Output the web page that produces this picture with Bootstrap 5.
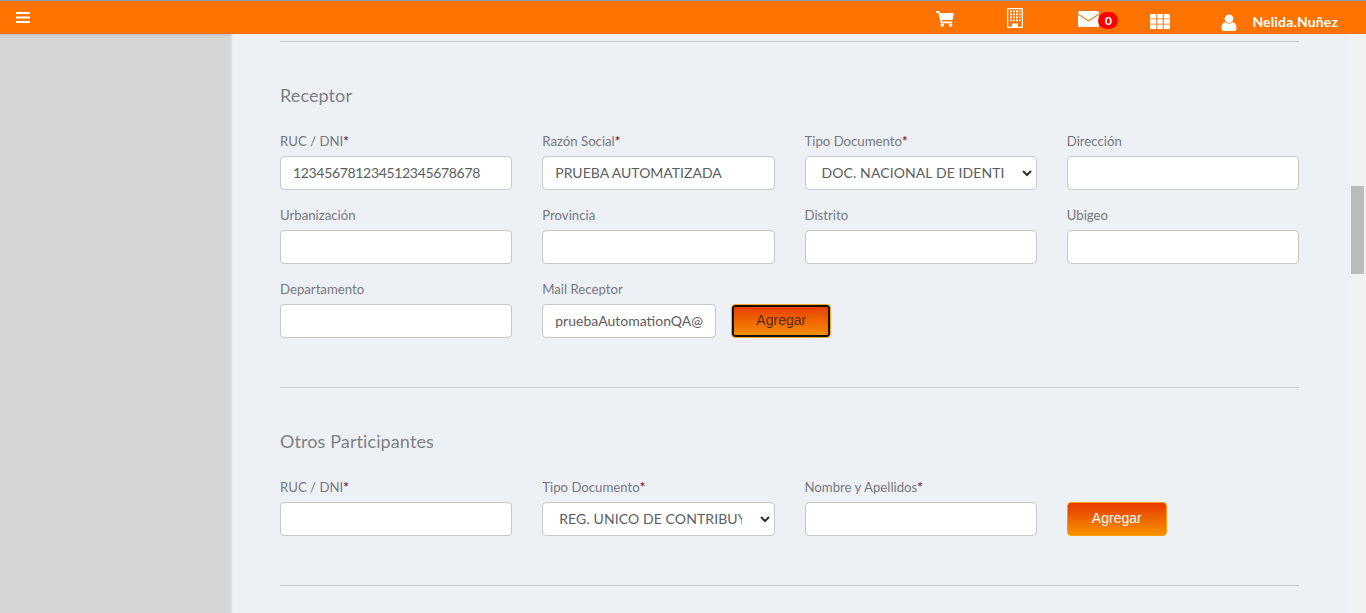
<!DOCTYPE html>
<html lang="en">
<head>
  <meta charset="UTF-8">
  <meta name="viewport" content="width=device-width, initial-scale=1.0">
  <title>Receptor</title>
  <link href="https://cdn.jsdelivr.net/npm/bootstrap@5.3.0/dist/css/bootstrap.min.css" rel="stylesheet">
  <style>
    html, body { height: 100%; overflow: hidden; }
    body { font-family: Lato, "Liberation Sans", sans-serif; background: #edf0f5; color: #76797c; }
    .topbar { height: 34px; background: #ff7300; border-top: 1px solid #8a9bb5; color: #fff; }
    .topbar svg { display: block; fill: #fff; }
    .menu-btn { margin: 11px 0 0 16px; }
    .top-icon { position: relative; }
    .icon-cart { margin-top: 10px; }
    .icon-building { margin: 7px 0 0 53px; }
    .icon-mail { margin: 10px 0 0 55px; }
    .icon-grid { margin: 13px 0 0 51px; }
    .icon-user { margin: 13px 0 0 51px; }
    .user-name { font-size: 14px; font-weight: 700; line-height: 17px; letter-spacing: .15px; margin: 12px 28px 0 15px; }
    .mail-count { position: absolute; left: 20px; top: 1px; width: 20px; height: 17px; border-radius: 9px; background: #f00; color: #fff; font-size: 12px; font-weight: 700; line-height: 17px; text-align: center; }
    .shell { height: calc(100% - 34px); }
    .side-panel { width: 231px; background: #d6d6d6; box-shadow: inset 0 3px 3px -2px rgba(0,0,0,.12), 1px 0 1px rgba(0,0,0,.06); flex: none; }
    .main-panel { padding: 0 50px 0 49px; min-width: 0; }
    .scroll-track { width: 17px; flex: none; background: #f1f1f1; padding: 152px 2px 0; }
    .scroll-thumb { height: 88px; background: #bcbcbc; }
    .rule { height: 1px; background: #c9cbce; }
    .rule-top { margin-top: 7px; }
    .rule-mid, .rule-end { margin-top: 33px; }
    .section-title { font-size: 18px; font-weight: 400; line-height: 22px; letter-spacing: .1px; color: #7d8083; margin: 42px 0 26px; }
    .field-row { --bs-gutter-x: 30px; --bs-gutter-y: 0; }
    .field-label { display: block; font-size: 13.2px; line-height: 17px; padding-top: 1px; margin-bottom: 6px; color: #76797c; }
    .field-label b { color: #8c2c3c; font-weight: 700; }
    .field-box { height: 74px; }
    .form-control.field-input, .form-select.field-input { height: 34px; font-size: 14px; color: #5a5d60; border-color: #c6c8ca; border-radius: 4px; padding: 0 12px 1px; background-color: #fff; }
    .form-select.field-input { padding-left: 16px; padding-right: 32px; letter-spacing: .1px; background-image: url("data:image/svg+xml,%3csvg xmlns='http://www.w3.org/2000/svg' viewBox='0 0 10 7'%3e%3cpath fill='none' stroke='%23333' stroke-width='2' d='M1 1l4 4 4-4'/%3e%3c/svg%3e"); background-position: right 4px center; background-size: 10px 7px; }
    .digits-input { letter-spacing: -.33px; }
    .mail-input { width: 174px; flex: none; }
    .btn-add { width: 100px; height: 34px; padding: 0 0 2px; font-family: "Liberation Sans", Arial, sans-serif; font-size: 14px; color: #fff; border: 1px solid #ff9c00; border-radius: 4px; background: linear-gradient(#e63900, #f79200); }
    .btn-add.is-focused { color: #5a2a10; border-color: #ffa51e; box-shadow: inset 0 0 0 2px #111; }
    .mail-row { gap: 15px; }
    .others-btn { padding-top: 24px; }
  </style>
</head>
<body>
  <div class="topbar d-flex align-items-start">
    <div class="menu-btn">
      <svg width="14" height="11" viewBox="0 0 14 11"><rect y="0" width="14" height="2"/><rect y="4.500" width="14" height="2"/><rect y="9" width="14" height="2"/></svg>
    </div>
    <div class="ms-auto d-flex align-items-start">
      <div class="top-icon icon-cart">
        <svg width="18" height="16" viewBox="0 0 19 17"><path d="M0 0h3.600l.6 2H19l-1.600 7.600H6.300l.3 1.600h10.600v1.800H5L2.400 1.800H0z"/><circle cx="6.600" cy="15" r="1.900"/><circle cx="15.400" cy="15" r="1.900"/></svg>
      </div>
      <div class="top-icon icon-building">
        <svg width="16" height="20" viewBox="0 0 16 20"><path fill-rule="evenodd" d="M1 0h14a1 1 0 0 1 1 1v18a1 1 0 0 1-1 1H1a1 1 0 0 1-1-1V1a1 1 0 0 1 1-1zM1.300 1.300v17.400h3.700v-3.200h6v3.200h3.700V1.300zM3 2.500h2v1.800H3zm3 0h2v1.800H6zm3 0h2v1.800H9zm3 0h1.500v1.800H12zM3 5.500h2v1.800H3zm3 0h2v1.800H6zm3 0h2v1.800H9zm3 0h1.500v1.800H12zM3 8.500h2v1.800H3zm3 0h2v1.800H6zm3 0h2v1.800H9zm3 0h1.500v1.800H12zM3 11.500h2v1.800H3zm3 0h2v1.800H6zm3 0h2v1.800H9zm3 0h1.500v1.800H12z"/></svg>
      </div>
      <div class="top-icon icon-mail">
        <svg width="21" height="16" viewBox="0 0 21 16"><path d="M1.500 0h18A1.500 1.500 0 0 1 21 1.500v.9l-10.500 6.900L0 2.400v-.9A1.500 1.500 0 0 1 1.500 0zM0 3.700l10.500 6.900L21 3.700v10.800a1.500 1.500 0 0 1-1.500 1.500h-18A1.500 1.500 0 0 1 0 14.500z"/></svg>
        <span class="mail-count">0</span>
      </div>
      <div class="top-icon icon-grid">
        <svg width="20" height="15" viewBox="0 0 20 15"><path d="M.6 0h5.700v4.400H0V.6A.6.600 0 0 1 .6 0zm6.700 0h5.400v4.400H7.300zm6.400 0h5.700a.6.600 0 0 1 .6.600v3.800h-6.300zM0 5.300h6.300v4.400H0zm7.300 0h5.400v4.400H7.300zm6.400 0H20v4.400h-6.300zM0 10.600h6.300V15H.6a.6.600 0 0 1-.6-.6zm7.300 0h5.400V15H7.300zm6.400 0H20v3.800a.6.600 0 0 1-.6.600h-5.700z"/></svg>
      </div>
      <div class="top-icon icon-user">
        <svg width="16" height="17" viewBox="0 0 16 18"><circle cx="8" cy="5" r="4.600"/><path d="M0 15c0-4 2-6 4-6.200 1 1 2.500 1.500 4 1.500s3-.5 4-1.500c2 .2 4 2.200 4 6.200 0 2-1.500 3-3 3H3c-1.500 0-3-1-3-3z"/></svg>
      </div>
      <span class="user-name">Nelida.Nuñez</span>
    </div>
  </div>

  <div class="shell d-flex">
    <div class="side-panel"></div>
    <div class="main-panel flex-grow-1">
      <div class="rule rule-top"></div>

      <h5 class="section-title">Receptor</h5>
      <div class="row field-row">
        <div class="col-3 field-box"><label class="field-label">RUC / DNI<b>*</b></label><input class="form-control field-input digits-input" value="123456781234512345678678"></div>
        <div class="col-3 field-box"><label class="field-label">Razón Social<b>*</b></label><input class="form-control field-input" value="PRUEBA AUTOMATIZADA"></div>
        <div class="col-3 field-box"><label class="field-label">Tipo Documento<b>*</b></label><select class="form-select field-input"><option>DOC. NACIONAL DE IDENTIDAD</option></select></div>
        <div class="col-3 field-box"><label class="field-label">Dirección</label><input class="form-control field-input"></div>
        <div class="col-3 field-box"><label class="field-label">Urbanización</label><input class="form-control field-input"></div>
        <div class="col-3 field-box"><label class="field-label">Provincia</label><input class="form-control field-input"></div>
        <div class="col-3 field-box"><label class="field-label">Distrito</label><input class="form-control field-input"></div>
        <div class="col-3 field-box"><label class="field-label">Ubigeo</label><input class="form-control field-input"></div>
        <div class="col-3 field-box"><label class="field-label">Departamento</label><input class="form-control field-input"></div>
        <div class="col-6 field-box">
          <label class="field-label">Mail Receptor</label>
          <div class="d-flex align-items-center mail-row">
            <input class="form-control field-input mail-input" value="pruebaAutomationQA@gmail.com">
            <button type="button" class="btn-add is-focused">Agregar</button>
          </div>
        </div>
      </div>
      <div class="rule rule-mid"></div>

      <h5 class="section-title">Otros Participantes</h5>
      <div class="row field-row">
        <div class="col-3 field-box"><label class="field-label">RUC / DNI<b>*</b></label><input class="form-control field-input"></div>
        <div class="col-3 field-box"><label class="field-label">Tipo Documento<b>*</b></label><select class="form-select field-input"><option>REG. UNICO DE CONTRIBUYENTES</option></select></div>
        <div class="col-3 field-box"><label class="field-label">Nombre y Apellidos<b>*</b></label><input class="form-control field-input"></div>
        <div class="col-3 field-box others-btn"><button type="button" class="btn-add">Agregar</button></div>
      </div>
      <div class="rule rule-end"></div>
    </div>
    <div class="scroll-track"><div class="scroll-thumb"></div></div>
  </div>

  <script src="https://cdn.jsdelivr.net/npm/bootstrap@5.3.0/dist/js/bootstrap.bundle.min.js"></script>
</body>
</html>
